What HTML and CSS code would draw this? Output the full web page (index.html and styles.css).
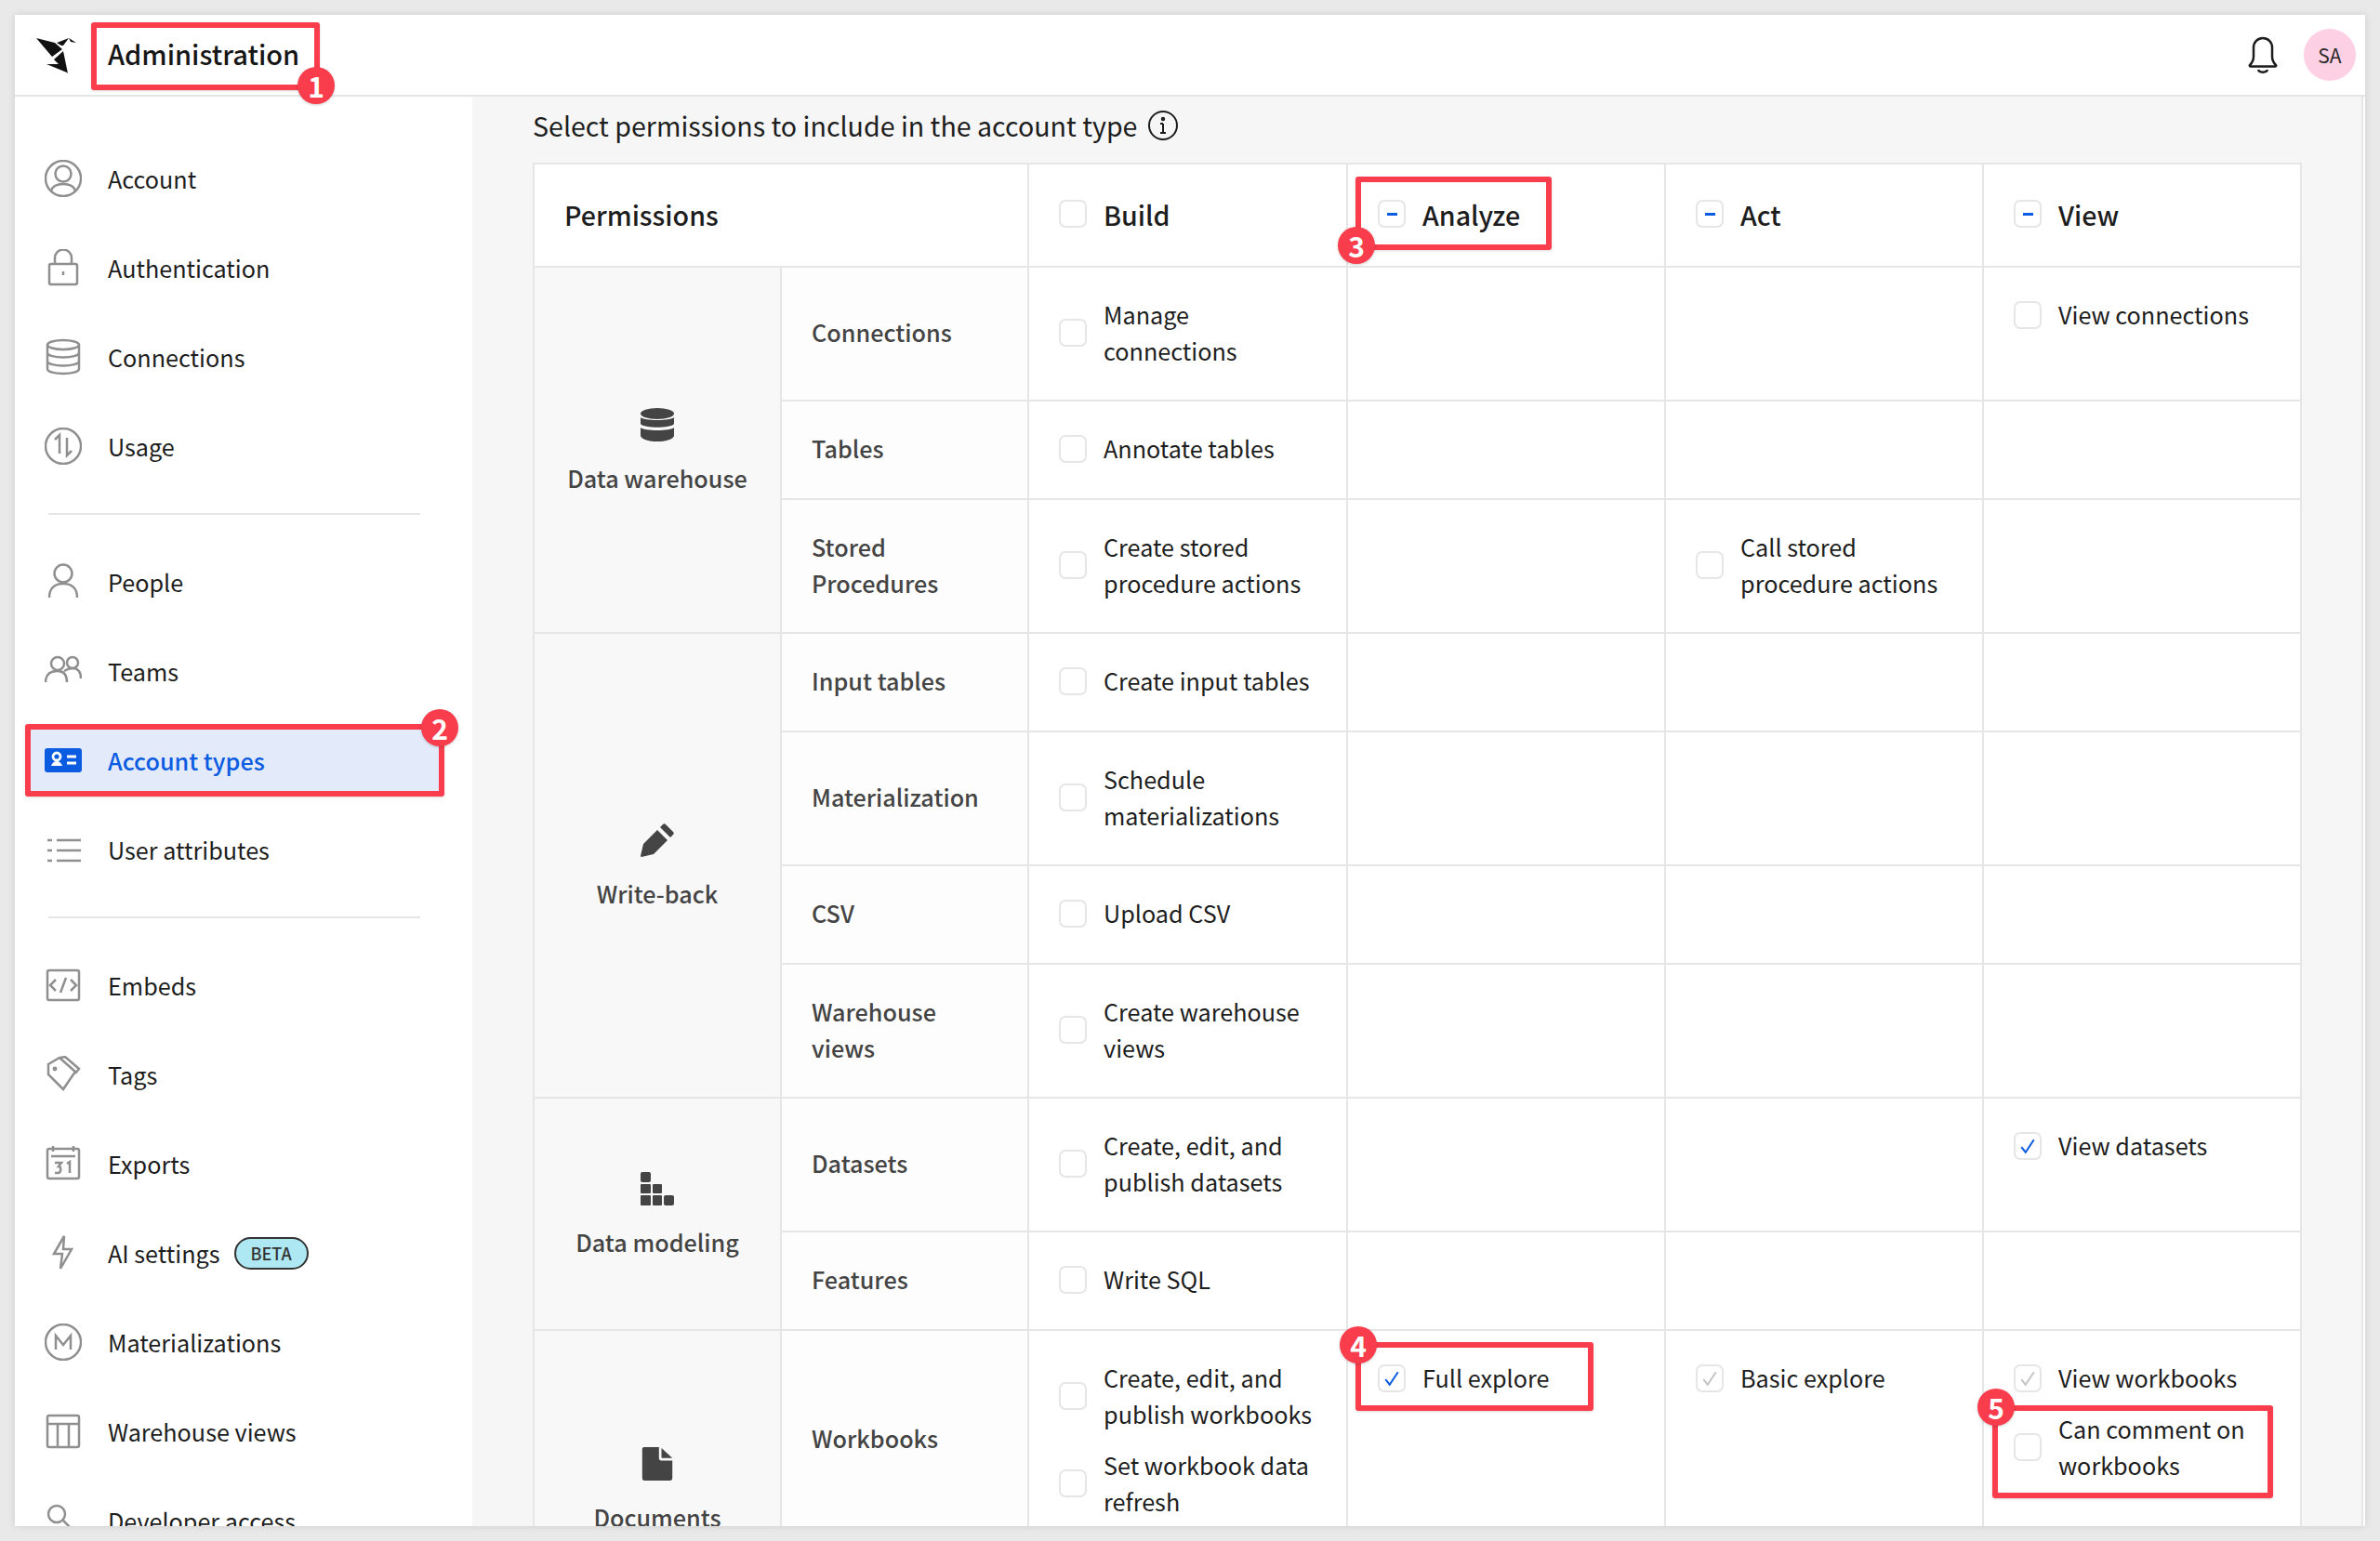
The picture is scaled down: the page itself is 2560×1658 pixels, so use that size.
FILE: index.html
```html
<!DOCTYPE html>
<html lang="en">
<head>
<meta charset="utf-8">
<title>Administration</title>
<link rel="stylesheet" href="styles.css">
</head>
<body>
<div class="window">
  <header class="topbar">
    <svg class="logo" viewBox="9 8 44 40"><path d="M9 10l20 5 8 7-11 8zM31 15l13-5-6 8h-2zM44 10l8 5-6-1zM28 33l10-9 5 24zM20 38h15l7 9z"/></svg>
    <div class="title">Administration</div>
    <div class="spacer"></div>
    <svg class="bell" viewBox="0 0 32 40"><path d="M2 31c3-3 4-5 4-9V12a10 10 0 0 1 20 0v10c0 4 1 6 4 9 .6.8 0 1.500-1 1.500H3c-1 0-1.600-.7-1-1.500zM11 36c1 3.500 9 3.500 10 0"/></svg>
    <div class="avatar">SA</div>
  </header>
  <div class="body">
    <nav class="sidebar">
      <a class="nav-item"><svg class="ic" viewBox="0 0 40 40"><circle cx="20" cy="20" r="19"/><circle cx="20" cy="15" r="8.500"/><path d="M7 33c2-6 7-7 13-7s11 1 13 7"/></svg><span>Account</span></a>
      <a class="nav-item"><svg class="ic" viewBox="0 0 40 40"><rect x="5" y="16" width="30" height="22" rx="2"/><path d="M11 16V9.500a9 9 0 0 1 18 0V16M20 24v4"/></svg><span>Authentication</span></a>
      <a class="nav-item"><svg class="ic" viewBox="0 0 40 40"><ellipse cx="20" cy="7" rx="17" ry="5"/><path d="M3 7v26c0 3 8 5 17 5s17-2 17-5V7M3 15.500c0 3 8 5 17 5s17-2 17-5M3 24.500c0 3 8 5 17 5s17-2 17-5"/></svg><span>Connections</span></a>
      <a class="nav-item"><svg class="ic" viewBox="0 0 40 40"><circle cx="20" cy="20" r="19"/><path d="M11 13l5-5v20M29 25l-5 5V11"/></svg><span>Usage</span></a>
      <div class="divider"></div>
      <a class="nav-item"><svg class="ic" viewBox="0 0 40 40"><circle cx="20" cy="11" r="9.500"/><path d="M5 37c0-10 6-15 15-15s15 5 15 15"/></svg><span>People</span></a>
      <a class="nav-item"><svg class="ic" viewBox="0 0 40 40"><circle cx="14" cy="12" r="7"/><circle cx="30" cy="11" r="6"/><path d="M1 32c0-8 5-12 13-12s10 5 10 12M21 20c3-2 5-3 9-3 6 0 9 4 9 11"/></svg><span>Teams</span></a>
      <a class="nav-item active"><svg class="ic-active" viewBox="0 0 40 28"><rect width="40" height="26" y="1" rx="3" class="ic-bg"/><circle cx="13" cy="10" r="4" class="ic-stroke"/><path d="M7 20c1-3 3-5 6-5s5 2 6 5z" class="ic-fill"/><path d="M24 10h10M24 17h10" class="ic-stroke"/></svg><span>Account types</span></a>
      <a class="nav-item"><svg class="ic" viewBox="0 0 40 40"><path d="M3 10h5M13 10h26M3 21h5M13 21h26M3 32h5M13 32h26"/></svg><span>User attributes</span></a>
      <div class="divider"></div>
      <a class="nav-item"><svg class="ic" viewBox="0 0 40 40"><rect x="3" y="4" width="34" height="32" rx="2"/><path d="M12 14l-6 6 6 6M28 14l6 6-6 6M17 28l6-16"/></svg><span>Embeds</span></a>
      <a class="nav-item"><svg class="ic" viewBox="0 0 40 40"><path d="M4 9l12-7 17 15-13 19L4 20zM17 2l5-1 15 13-4 5"/><circle cx="11" cy="14" r="1.200"/></svg><span>Tags</span></a>
      <a class="nav-item"><svg class="ic" viewBox="0 0 40 40"><rect x="3" y="4" width="34" height="32" rx="2"/><path d="M9 1v6M31 1v6M7 12h26M11 19h7l-3 4c3 0 3 6 0 7h-4M24 20l3-2v12"/></svg><span>Exports</span></a>
      <a class="nav-item"><svg class="ic" viewBox="0 0 40 40"><path d="M21 2L10 21h9l-2 16 12-21h-9z"/></svg><span>AI settings</span><span class="beta">BETA</span></a>
      <a class="nav-item"><svg class="ic" viewBox="0 0 40 40"><circle cx="20" cy="20" r="19"/><path d="M12 28V13l8 10 8-10v15"/></svg><span>Materializations</span></a>
      <a class="nav-item"><svg class="ic" viewBox="0 0 40 40"><rect x="3" y="3" width="34" height="34" rx="2"/><path d="M3 12h34M14 12v25M26 12v25"/></svg><span>Warehouse views</span></a>
      <a class="nav-item"><svg class="ic" viewBox="0 0 40 40"><circle cx="13" cy="13" r="9"/><path d="M20 20l15 15"/></svg><span>Developer access</span></a>
    </nav>
    <main class="main">
      <div class="subtitle"><span>Select permissions to include in the account type</span>
        <svg class="info" viewBox="0 0 32 32"><circle cx="16" cy="16" r="15"/><path d="M16 14v10M13 14h3M13 24h6"/><circle cx="16" cy="9" r="1.200"/></svg>
      </div>
      <table class="perm-table">
        <colgroup><col class="col-cat"><col class="col-sub"><col class="col-b"><col class="col-p"><col class="col-p"><col class="col-p"></colgroup>
        <thead>
          <tr class="head-row">
            <th colspan="2" class="th-perm">Permissions</th>
            <th><div class="opt"><i class="cb"></i><span>Build</span></div></th>
            <th><div class="opt"><i class="cb"><b class="dash"></b></i><span>Analyze</span></div></th>
            <th><div class="opt"><i class="cb"><b class="dash"></b></i><span>Act</span></div></th>
            <th><div class="opt"><i class="cb"><b class="dash"></b></i><span>View</span></div></th>
          </tr>
        </thead>
        <tbody>
          <tr class="r2">
            <td rowspan="3" class="cat"><div class="cat-in"><svg class="cat-ic" viewBox="0 0 36 36"><ellipse cx="18" cy="6" rx="18" ry="6"/><path d="M0 10c3 4 33 4 36 0v7c-3 5-33 5-36 0zM0 21c3 4 33 4 36 0v9c-3 8-33 8-36 0z"/></svg><span>Data warehouse</span></div></td>
            <td class="sub">Connections</td>
            <td class="perm"><div class="opt"><i class="cb"></i><span>Manage<br>connections</span></div></td>
            <td class="perm"></td><td class="perm"></td>
            <td class="perm"><div class="opt"><i class="cb"></i><span>View connections</span></div></td>
          </tr>
          <tr class="r1">
            <td class="sub">Tables</td>
            <td class="perm"><div class="opt"><i class="cb"></i><span>Annotate tables</span></div></td>
            <td class="perm"></td><td class="perm"></td><td class="perm"></td>
          </tr>
          <tr class="r2">
            <td class="sub">Stored<br>Procedures</td>
            <td class="perm"><div class="opt"><i class="cb"></i><span>Create stored<br>procedure actions</span></div></td>
            <td class="perm"></td>
            <td class="perm"><div class="opt"><i class="cb"></i><span>Call stored<br>procedure actions</span></div></td>
            <td class="perm"></td>
          </tr>
          <tr class="r1">
            <td rowspan="4" class="cat"><div class="cat-in"><svg class="cat-ic" viewBox="0 0 36 36"><path d="M27 1l8 8c1 1 1 2 0 3l-3 3-11-11 3-3c1-1 2-1 3 0zM18 7l11 11-15 15-13 3c-1 0-1-1-1-1l3-13z"/></svg><span>Write-back</span></div></td>
            <td class="sub">Input tables</td>
            <td class="perm"><div class="opt"><i class="cb"></i><span>Create input tables</span></div></td>
            <td class="perm"></td><td class="perm"></td><td class="perm"></td>
          </tr>
          <tr class="r2">
            <td class="sub">Materialization</td>
            <td class="perm"><div class="opt"><i class="cb"></i><span>Schedule<br>materializations</span></div></td>
            <td class="perm"></td><td class="perm"></td><td class="perm"></td>
          </tr>
          <tr class="r1">
            <td class="sub">CSV</td>
            <td class="perm"><div class="opt"><i class="cb"></i><span>Upload CSV</span></div></td>
            <td class="perm"></td><td class="perm"></td><td class="perm"></td>
          </tr>
          <tr class="r2">
            <td class="sub">Warehouse<br>views</td>
            <td class="perm"><div class="opt"><i class="cb"></i><span>Create warehouse<br>views</span></div></td>
            <td class="perm"></td><td class="perm"></td><td class="perm"></td>
          </tr>
          <tr class="r2">
            <td rowspan="2" class="cat"><div class="cat-in"><svg class="cat-ic" viewBox="0 0 36 36"><rect x="0" y="0" width="11" height="11" rx="2"/><rect x="0" y="13" width="11" height="10" rx="1"/><rect x="13" y="13" width="10" height="10" rx="1"/><rect x="0" y="25" width="11" height="11" rx="1"/><rect x="13" y="25" width="10" height="11" rx="1"/><rect x="25" y="25" width="11" height="11" rx="2"/></svg><span>Data modeling</span></div></td>
            <td class="sub">Datasets</td>
            <td class="perm"><div class="opt"><i class="cb"></i><span>Create, edit, and<br>publish datasets</span></div></td>
            <td class="perm"></td><td class="perm"></td>
            <td class="perm"><div class="opt"><i class="cb"><svg class="chk" viewBox="0 0 16 16"><path d="M2 9l4 5 8-12"/></svg></i><span>View datasets</span></div></td>
          </tr>
          <tr class="r1">
            <td class="sub">Features</td>
            <td class="perm"><div class="opt"><i class="cb"></i><span>Write SQL</span></div></td>
            <td class="perm"></td><td class="perm"></td><td class="perm"></td>
          </tr>
          <tr>
            <td rowspan="2" class="cat"><div class="cat-in"><svg class="cat-ic" viewBox="0 0 36 40"><path d="M2 0h18v13c0 2 1 3 3 3h13v21c0 2-1 3-3 3H3c-2 0-3-1-3-3V3c0-2 1-3 2-3zM23 1l13 12H24c-1 0-1-1-1-1z"/></svg><span>Documents</span></div></td>
            <td class="sub">Workbooks</td>
            <td class="perm"><div class="stack">
              <div class="opt"><i class="cb"></i><span>Create, edit, and<br>publish workbooks</span></div>
              <div class="opt"><i class="cb"></i><span>Set workbook data<br>refresh</span></div>
            </div></td>
            <td class="perm"><div class="opt"><i class="cb"><svg class="chk" viewBox="0 0 16 16"><path d="M2 9l4 5 8-12"/></svg></i><span>Full explore</span></div></td>
            <td class="perm"><div class="opt"><i class="cb dis"><svg class="chk" viewBox="0 0 16 16"><path d="M2 9l4 5 8-12"/></svg></i><span>Basic explore</span></div></td>
            <td class="perm"><div class="stack">
              <div class="opt"><i class="cb dis"><svg class="chk" viewBox="0 0 16 16"><path d="M2 9l4 5 8-12"/></svg></i><span>View workbooks</span></div>
              <div class="opt"><i class="cb"></i><span>Can comment on<br>workbooks</span></div>
            </div></td>
          </tr>
          <tr class="r1"><td class="sub"></td><td class="perm"></td><td class="perm"></td><td class="perm"></td><td class="perm"></td></tr>
        </tbody>
      </table>
    </main>
    <div class="rail"></div>
  </div>
  <div class="callout c1"></div><div class="badge b1">1</div>
  <div class="callout c2"></div><div class="badge b2">2</div>
  <div class="callout c3"></div><div class="badge b3">3</div>
  <div class="callout c4"></div><div class="badge b4">4</div>
  <div class="callout c5"></div><div class="badge b5">5</div>
</div>
</body>
</html>
```
FILE: styles.css
```css
* { box-sizing: border-box; }
html, body { margin: 0; height: 1658px; overflow: hidden; }
body {
  background: #e9e9e9;
  padding: 16px;
  font-family: "Noto Sans CJK SC", "Noto Sans", sans-serif;
  font-size: 25.2px;
  line-height: 39px;
  color: #1d1d1d;
}
.window {
  position: relative;
  width: 2528px;
  height: 1626px;
  background: #fff;
  overflow: hidden;
  display: flex;
  flex-direction: column;
  box-shadow: 0 0 8px rgba(0,0,0,.12);
}
.topbar {
  flex: 0 0 88px;
  display: flex;
  align-items: center;
  padding: 0 10px 0 23px;
  border-bottom: 2px solid #e6e6e6;
  background: #fff;
}
.logo { width: 44px; height: 40px; fill: #111; margin-right: 33px; }
.title { font-size: 29px; font-weight: 500; color: #161616; padding-bottom: 3px; }
.spacer { flex: 1; }
.bell { width: 32px; height: 40px; fill: none; stroke: #1d1d1d; stroke-width: 2.5; margin-right: 28px; }
.avatar {
  width: 56px; height: 56px; border-radius: 50%;
  background: #fdd0e4; color: #2a2a2a;
  display: flex; align-items: center; justify-content: center;
  font-size: 21px;
}
.body { flex: 1; display: flex; min-height: 0; }
.sidebar {
  flex: 0 0 492px;
  background: #fff;
  padding-top: 40px;
  overflow: hidden;
}
.nav-item {
  display: flex;
  align-items: center;
  height: 96px;
  padding-left: 32px;
  color: #1d1d1d;
  flex-shrink: 0;
}
.nav-item.active {
  color: #0b5ce1;
  font-weight: 500;
  background: linear-gradient(#e3eafa, #e3eafa) no-repeat 12px 10px / 450px 76px;
}
.ic { width: 40px; height: 40px; fill: none; stroke: #8f8f8f; stroke-width: 2.500; margin-right: 28px; flex: none; }
.ic-active { width: 40px; height: 28px; margin-right: 28px; flex: none; }
.ic-bg { fill: #0b5ce1; }
.ic-stroke { fill: none; stroke: #fff; stroke-width: 2.800; }
.ic-fill { fill: #fff; }
.beta {
  margin-left: 15px;
  width: 80px; height: 35px;
  border: 2px solid #333;
  border-radius: 18px;
  background: #aee8f2;
  color: #333;
  font-size: 18px;
  font-weight: 500;
  line-height: 31px;
  text-align: center;
}
.divider { height: 2px; background: #e6e6e6; margin: 24px 56px 24px 36px; }
.main {
  flex: 1;
  background: #f6f6f6;
  padding: 11px 0 0 65px;
  overflow: hidden;
}
.rail { flex: 0 0 4px; border-left: 2px solid #e6e6e6; background: #fff; }
.subtitle {
  display: flex;
  align-items: center;
  gap: 12px;
  height: 39px;
  margin-bottom: 21px;
  font-size: 28.6px;
  color: #1d1d1d;
}
.info { width: 32px; height: 32px; fill: none; stroke: #1d1d1d; stroke-width: 2; }
.perm-table {
  table-layout: fixed;
  border-collapse: collapse;
  width: 1902px;
  background: #fff;
}
.col-cat { width: 266px; }
.col-sub { width: 266px; }
.col-b { width: 343px; }
.col-p { width: 342px; }
th, td { border: 2px solid #e6e6e6; padding: 0; }
.head-row { height: 111px; }
th { text-align: left; font-size: 28.6px; font-weight: 500; color: #1d1d1d; padding: 0 32px 3px; vertical-align: middle; background: #fff; }
.r1 { height: 106px; }
.r2 { height: 144px; }
.cat { background: #f8f8f8; vertical-align: middle; text-align: center; color: #444; font-weight: 500; }
.cat-in { display: flex; flex-direction: column; align-items: center; gap: 20px; padding-top: 5px; }
.cat-ic { width: 36px; height: 36px; fill: #444; }
.sub { background: #fdfdfd; padding: 0 32px 3px; color: #444; font-weight: 500; vertical-align: middle; }
.perm { vertical-align: top; padding: 31px 32px; }
.opt { display: flex; align-items: center; gap: 18px; }
.stack { display: flex; flex-direction: column; gap: 16px; }
.cb {
  flex: none;
  width: 30px; height: 30px;
  border: 2px solid #e6e6e6;
  border-radius: 7px;
  background: #fff;
  display: flex; align-items: center; justify-content: center;
}
.dash { width: 11px; height: 3px; background: #0b5ce1; }
.chk { width: 18px; height: 18px; fill: none; stroke: #0b5ce1; stroke-width: 1.800; }
.dis .chk { stroke: #c4c4c4; }
.callout {
  position: absolute;
  border: 6px solid #f93d4c;
  border-radius: 3px;
  box-shadow: 0 1px 3px rgba(0,0,0,.15);
}
.badge {
  position: absolute;
  width: 40px; height: 40px;
  border-radius: 50%;
  background: #f93d4c;
  color: #fff;
  font-size: 30px;
  font-weight: 700;
  line-height: 40px;
  text-align: center;
  box-shadow: 0 1px 3px rgba(0,0,0,.2);
}
.c1 { left: 82px; top: 8px; width: 246px; height: 73px; }
.b1 { left: 304px; top: 56px; }
.c2 { left: 11px; top: 763px; width: 451px; height: 78px; }
.b2 { left: 437px; top: 747px; }
.c3 { left: 1442px; top: 174px; width: 211px; height: 79px; }
.b3 { left: 1423px; top: 228px; }
.c4 { left: 1442px; top: 1428px; width: 256px; height: 74px; }
.b4 { left: 1425px; top: 1411px; }
.c5 { left: 2127px; top: 1496px; width: 302px; height: 100px; }
.b5 { left: 2111px; top: 1478px; }
```
